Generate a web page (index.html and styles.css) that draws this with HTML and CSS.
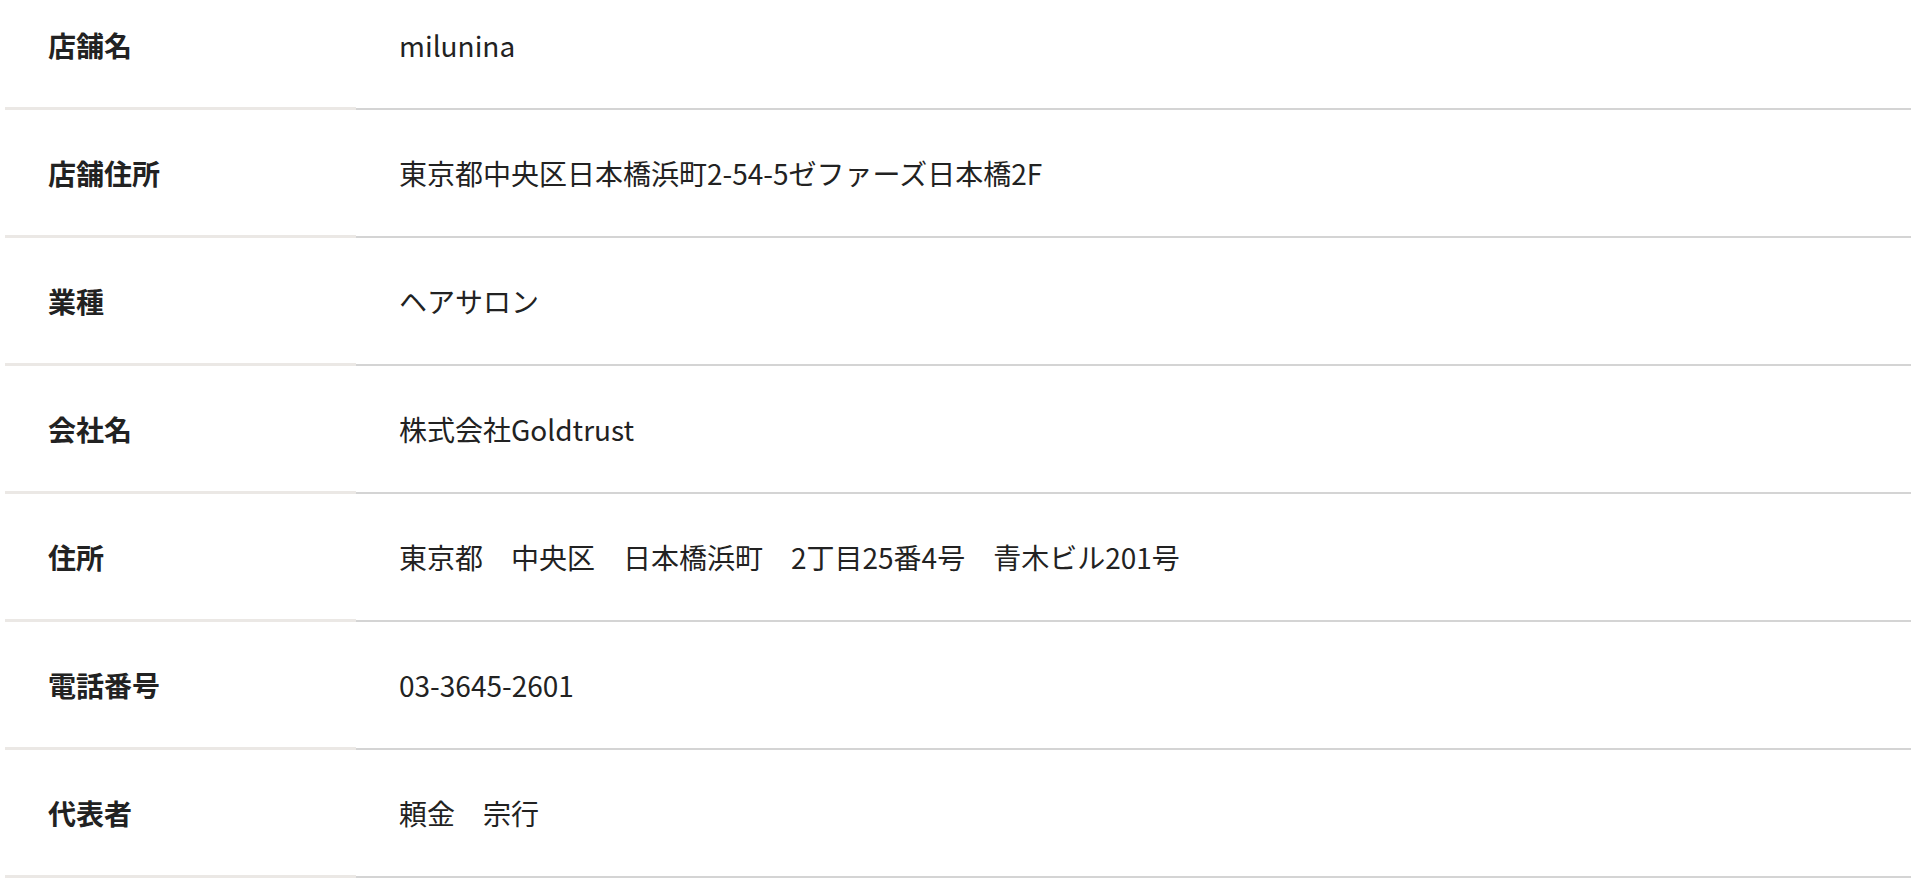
FILE: index.html
```html
<!DOCTYPE html>
<html lang="ja">
<head>
<meta charset="utf-8">
<title>店舗情報</title>
<link rel="stylesheet" href="styles.css">
</head>
<body>
<div class="wrap">
  <table class="info">
    <tbody>
      <tr><th>店舗名</th><td>milunina</td></tr>
      <tr><th>店舗住所</th><td>東京都中央区日本橋浜町2-54-5ゼファーズ日本橋2F</td></tr>
      <tr><th>業種</th><td>ヘアサロン</td></tr>
      <tr><th>会社名</th><td>株式会社Goldtrust</td></tr>
      <tr><th>住所</th><td>東京都　中央区　日本橋浜町　2丁目25番4号　青木ビル201号</td></tr>
      <tr><th>電話番号</th><td>03-3645-2601</td></tr>
      <tr><th>代表者</th><td>頼金　宗行</td></tr>
    </tbody>
  </table>
</div>
</body>
</html>
```

FILE: styles.css
```css
html, body {
  margin: 0;
  padding: 0;
  background: #ffffff;
}

body {
  font-family: "Noto Sans CJK JP", "Noto Sans", sans-serif;
  color: #222222;
  overflow: hidden;
}

.wrap {
  margin-top: -18px;
  padding: 0 9px 0 5px;
}

.info {
  width: 100%;
  border-collapse: separate;
  border-spacing: 0;
}

.info th,
.info td {
  box-sizing: border-box;
  text-align: left;
  vertical-align: middle;
  font-size: 28px;
  line-height: 42px;
  padding: 41.5px 42px 41.5px 43px;
}

.info th {
  width: 351px;
  font-weight: 700;
  border-bottom: 3px solid #ebe8e5;
}

.info td {
  font-weight: 400;
  border-bottom: 2px solid #d4d4d4;
}
```
